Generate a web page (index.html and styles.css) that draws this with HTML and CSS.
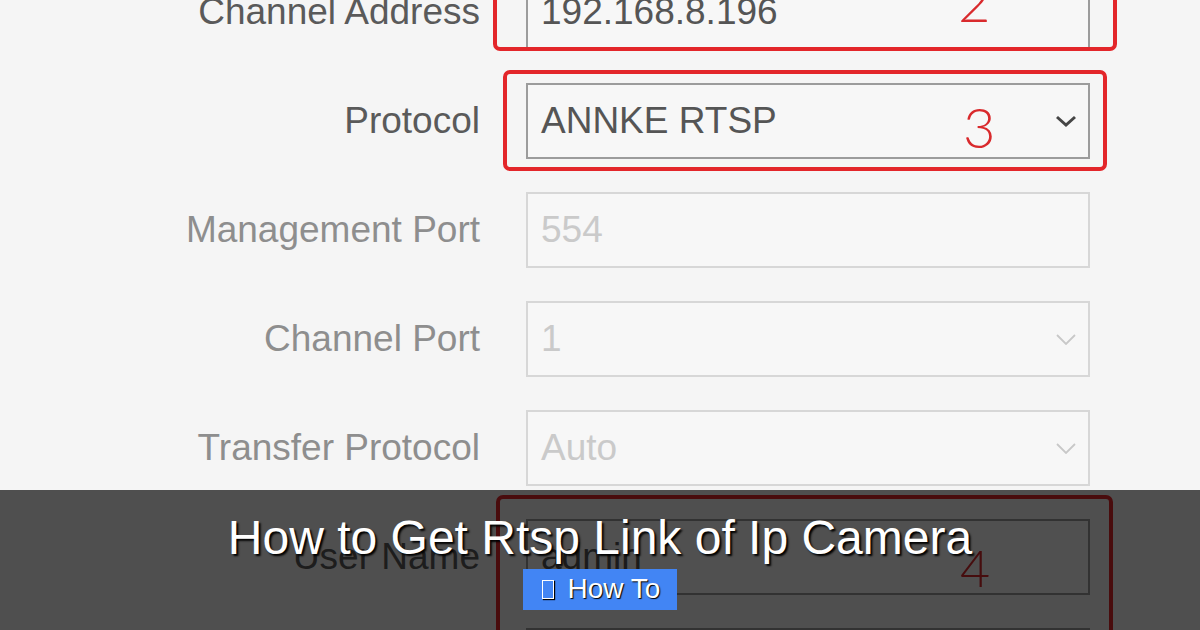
FILE: index.html
```html
<!DOCTYPE html>
<html lang="en">

<head>
    <meta charset="UTF-8">
    <meta name="viewport" content="width=device-width, initial-scale=1.0">
    <title>How to Get Rtsp Link of Ip Camera</title>
    <link rel="stylesheet" href="styles.css">
</head>

<body>
    <div id="screen">
        <div class="form">
            <div class="row">
                <div class="label">Channel Address</div>
                <div class="field">
                    <div class="input">192.168.8.196</div>
                    <div class="mark mark-2"></div>
                    <span class="num num-2">2</span>
                </div>
            </div>
            <div class="row">
                <div class="label">Protocol</div>
                <div class="field">
                    <div class="input">ANNKE RTSP
                        <svg class="chev" viewBox="0 0 22 12"><path d="M2 2 L11 10 L20 2" /></svg>
                    </div>
                    <div class="mark mark-3"></div>
                    <span class="num num-3">3</span>
                </div>
            </div>
            <div class="row off">
                <div class="label">Management Port</div>
                <div class="field">
                    <div class="input">554</div>
                </div>
            </div>
            <div class="row off">
                <div class="label">Channel Port</div>
                <div class="field">
                    <div class="input">1
                        <svg class="chev" viewBox="0 0 22 12"><path d="M2 2 L11 11 L20 2" /></svg>
                    </div>
                </div>
            </div>
            <div class="row off">
                <div class="label">Transfer Protocol</div>
                <div class="field">
                    <div class="input">Auto
                        <svg class="chev" viewBox="0 0 22 12"><path d="M2 2 L11 11 L20 2" /></svg>
                    </div>
                </div>
            </div>
            <div class="row">
                <div class="label">User Name</div>
                <div class="field">
                    <div class="input">admin</div>
                    <div class="mark mark-4"></div>
                    <span class="num num-4">4</span>
                </div>
            </div>
            <div class="row">
                <div class="label">Password</div>
                <div class="field">
                    <div class="input"></div>
                </div>
            </div>
        </div>

        <!-- caption band over the screenshot -->
        <div class="banner">
            <h1>How to Get Rtsp Link of Ip Camera</h1>
            <span class="tag"><i class="tag-icon"></i>How To</span>
        </div>
    </div>
</body>

</html>
```

FILE: styles.css
```css
* {
    margin: 0;
    padding: 0;
    box-sizing: border-box;
}

html,
body {
    width: 1200px;
    height: 630px;
    overflow: hidden;
}

body {
    background: #f5f5f5;
    font-family: "Liberation Sans", Arial, sans-serif;
}

#screen {
    position: relative;
    height: 630px;
    overflow: hidden;
}

.form {
    display: flex;
    flex-direction: column;
    gap: 33px;
    margin-top: -26px;
}

.row {
    display: grid;
    grid-template-columns: 480px 564px;
    column-gap: 46px;
    align-items: center;
}

.label {
    text-align: right;
    font-size: 37px;
    color: #5a5a5a;
    white-space: nowrap;
}

.off .label {
    color: #8e8e8e;
}

.field {
    position: relative;
}

.input {
    height: 76px;
    border: 2px solid #9c9c9c;
    background: #f7f7f7;
    display: flex;
    align-items: center;
    justify-content: space-between;
    padding: 0 11px 0 13px;
    font-size: 37px;
    color: #555;
}

.off .input {
    border-color: #d7d7d7;
    color: #cacaca;
}

.chev {
    width: 22px;
    height: 12px;
    fill: none;
    stroke: #454545;
    stroke-width: 3;
}

.off .chev {
    stroke: #c8c8c8;
    stroke-width: 1.8;
}

.mark {
    position: absolute;
    border: 4px solid #e3262a;
    border-radius: 7px;
}

.mark-2 {
    left: -33px;
    right: -27px;
    top: -40px;
    bottom: -1px;
}

.mark-3 {
    left: -23px;
    right: -17px;
    top: -13px;
    bottom: -12px;
}

.mark-4 {
    left: -30px;
    right: -23px;
    top: -24px;
    bottom: -80px;
}

.num {
    position: absolute;
    font-family: Lato, "Open Sans", sans-serif;
    font-weight: 300;
    font-size: 56px;
    line-height: 1;
    color: #d92a2d;
}

.num-2 {
    left: 432px;
    top: -1px;
}

.num-3 {
    left: 437px;
    top: 16px;
}

.num-4 {
    left: 434px;
    top: 22px;
    font-size: 52px;
}

.banner {
    position: absolute;
    left: 0;
    right: 0;
    bottom: 0;
    height: 140px;
    background: rgba(0, 0, 0, 0.68);
    display: flex;
    flex-direction: column;
    align-items: center;
    justify-content: center;
}

.banner h1 {
    font-size: 48px;
    font-weight: normal;
    line-height: 54px;
    color: #fff;
    text-shadow: 2px 2px 2px #000;
}

.tag {
    display: flex;
    align-items: center;
    height: 41px;
    margin-top: 4px;
    padding: 0 17px 0 19px;
    background: #4285f4;
    color: #fff;
    font-size: 28px;
    text-shadow: 1px 1px 1px #000;
}

.tag-icon {
    width: 12px;
    height: 19px;
    border: 1.5px solid #fff;
    box-shadow: 1px 1px 1px #000;
    margin-right: 14px;
}
```
